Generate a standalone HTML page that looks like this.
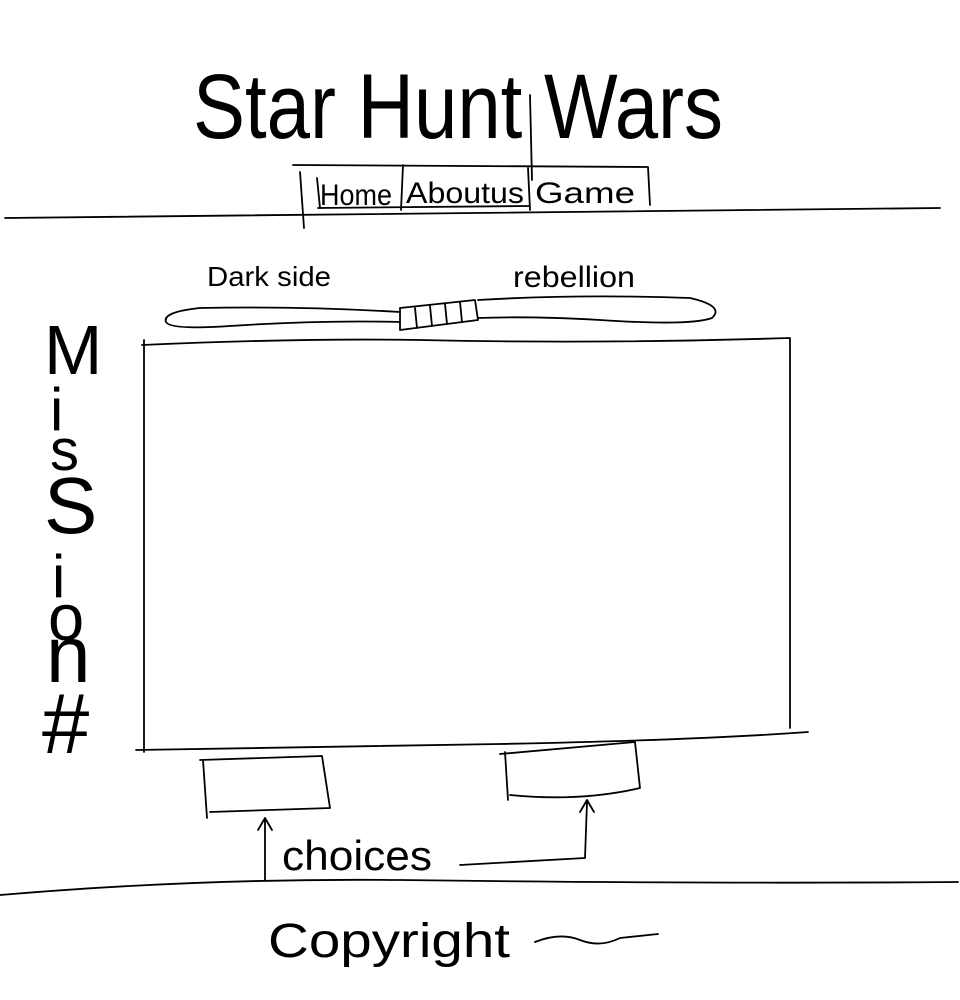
<!DOCTYPE html>
<html><head><meta charset="utf-8"><style>
html,body{margin:0;padding:0;background:#fff;width:960px;height:1000px;overflow:hidden}
svg{display:block}
text{font-family:"Liberation Sans",sans-serif;fill:#000}
</style></head><body>
<svg width="960" height="1000" viewBox="0 0 960 1000" fill="none" stroke="#000" stroke-width="1.8" stroke-linecap="round" stroke-linejoin="round">
<text x="193" y="138" font-size="92" textLength="530" lengthAdjust="spacingAndGlyphs" stroke="none">Star Hunt Wars</text>
<path d="M530 95 L532 180"/>
<path d="M293 165 L648 167 L650 205"/>
<path d="M300 172 L304 228"/>
<path d="M317 178 L320 208"/>
<path d="M403 165 L401 210"/>
<path d="M528 168 L530 210"/>
<path d="M318 208 L530 206"/>
<text x="320" y="205" font-size="30" textLength="72" lengthAdjust="spacingAndGlyphs" stroke="none">Home</text>
<text x="406" y="203" font-size="30" textLength="118" lengthAdjust="spacingAndGlyphs" stroke="none">Aboutus</text>
<text x="535" y="203" font-size="30" textLength="100" lengthAdjust="spacingAndGlyphs" stroke="none">Game</text>
<path d="M5 218 Q400 212 940 208"/>
<text x="207" y="286" font-size="28" textLength="124" lengthAdjust="spacingAndGlyphs" stroke="none">Dark side</text>
<text x="513" y="287" font-size="30" textLength="122" lengthAdjust="spacingAndGlyphs" stroke="none">rebellion</text>
<path d="M400 312 Q300 306 200 308 Q162 312 166 322 Q170 330 230 326 Q320 320 400 322"/>
<path d="M400 308 L475 300 L478 320 L400 330 Z"/>
<path d="M415 308 L417 328 M430 306 L432 326 M445 304 L447 324 M460 302 L462 322"/>
<path d="M478 300 Q580 294 690 298 Q725 306 712 318 Q690 326 600 320 Q530 316 478 318"/>
<path d="M142 345 Q300 338 420 340 Q600 344 790 338 L790 728"/>
<path d="M144 340 L144 752"/>
<path d="M136 750 Q300 748 500 744 Q700 740 808 732"/>
<!-- Mission# -->
<text x="44" y="374" font-size="70" stroke="none">M</text>
<text x="50" y="430" font-size="60" stroke="none">i</text>
<text x="50" y="470" font-size="58" stroke="none">s</text>
<text x="44" y="533" font-size="80" stroke="none">S</text>
<text x="52" y="597" font-size="60" stroke="none">i</text>
<text x="48" y="640" font-size="65" stroke="none">o</text>
<text x="46" y="682" font-size="80" stroke="none">n</text>
<text x="42" y="753" font-size="85" stroke="none">#</text>
<path d="M203 760 L207 818 M200 760 L322 756 L330 808 L210 812"/>
<path d="M505 752 L508 800 M500 754 Q570 748 635 742 L640 788 Q580 802 510 795"/>
<path d="M265 880 L265 820 M258 830 L265 818 L272 830"/>
<path d="M460 865 L585 858 L587 802 M580 812 L587 800 L594 812"/>
<text x="282" y="870" font-size="42" textLength="150" lengthAdjust="spacingAndGlyphs" stroke="none">choices</text>
<path d="M0 895 Q200 878 400 880 Q700 884 958 882"/>
<text x="268" y="957" font-size="48" textLength="242" lengthAdjust="spacingAndGlyphs" stroke="none">Copyright</text>
<path d="M535 942 Q560 932 580 940 Q600 948 620 938 L658 934"/>
</svg>
</body></html>
